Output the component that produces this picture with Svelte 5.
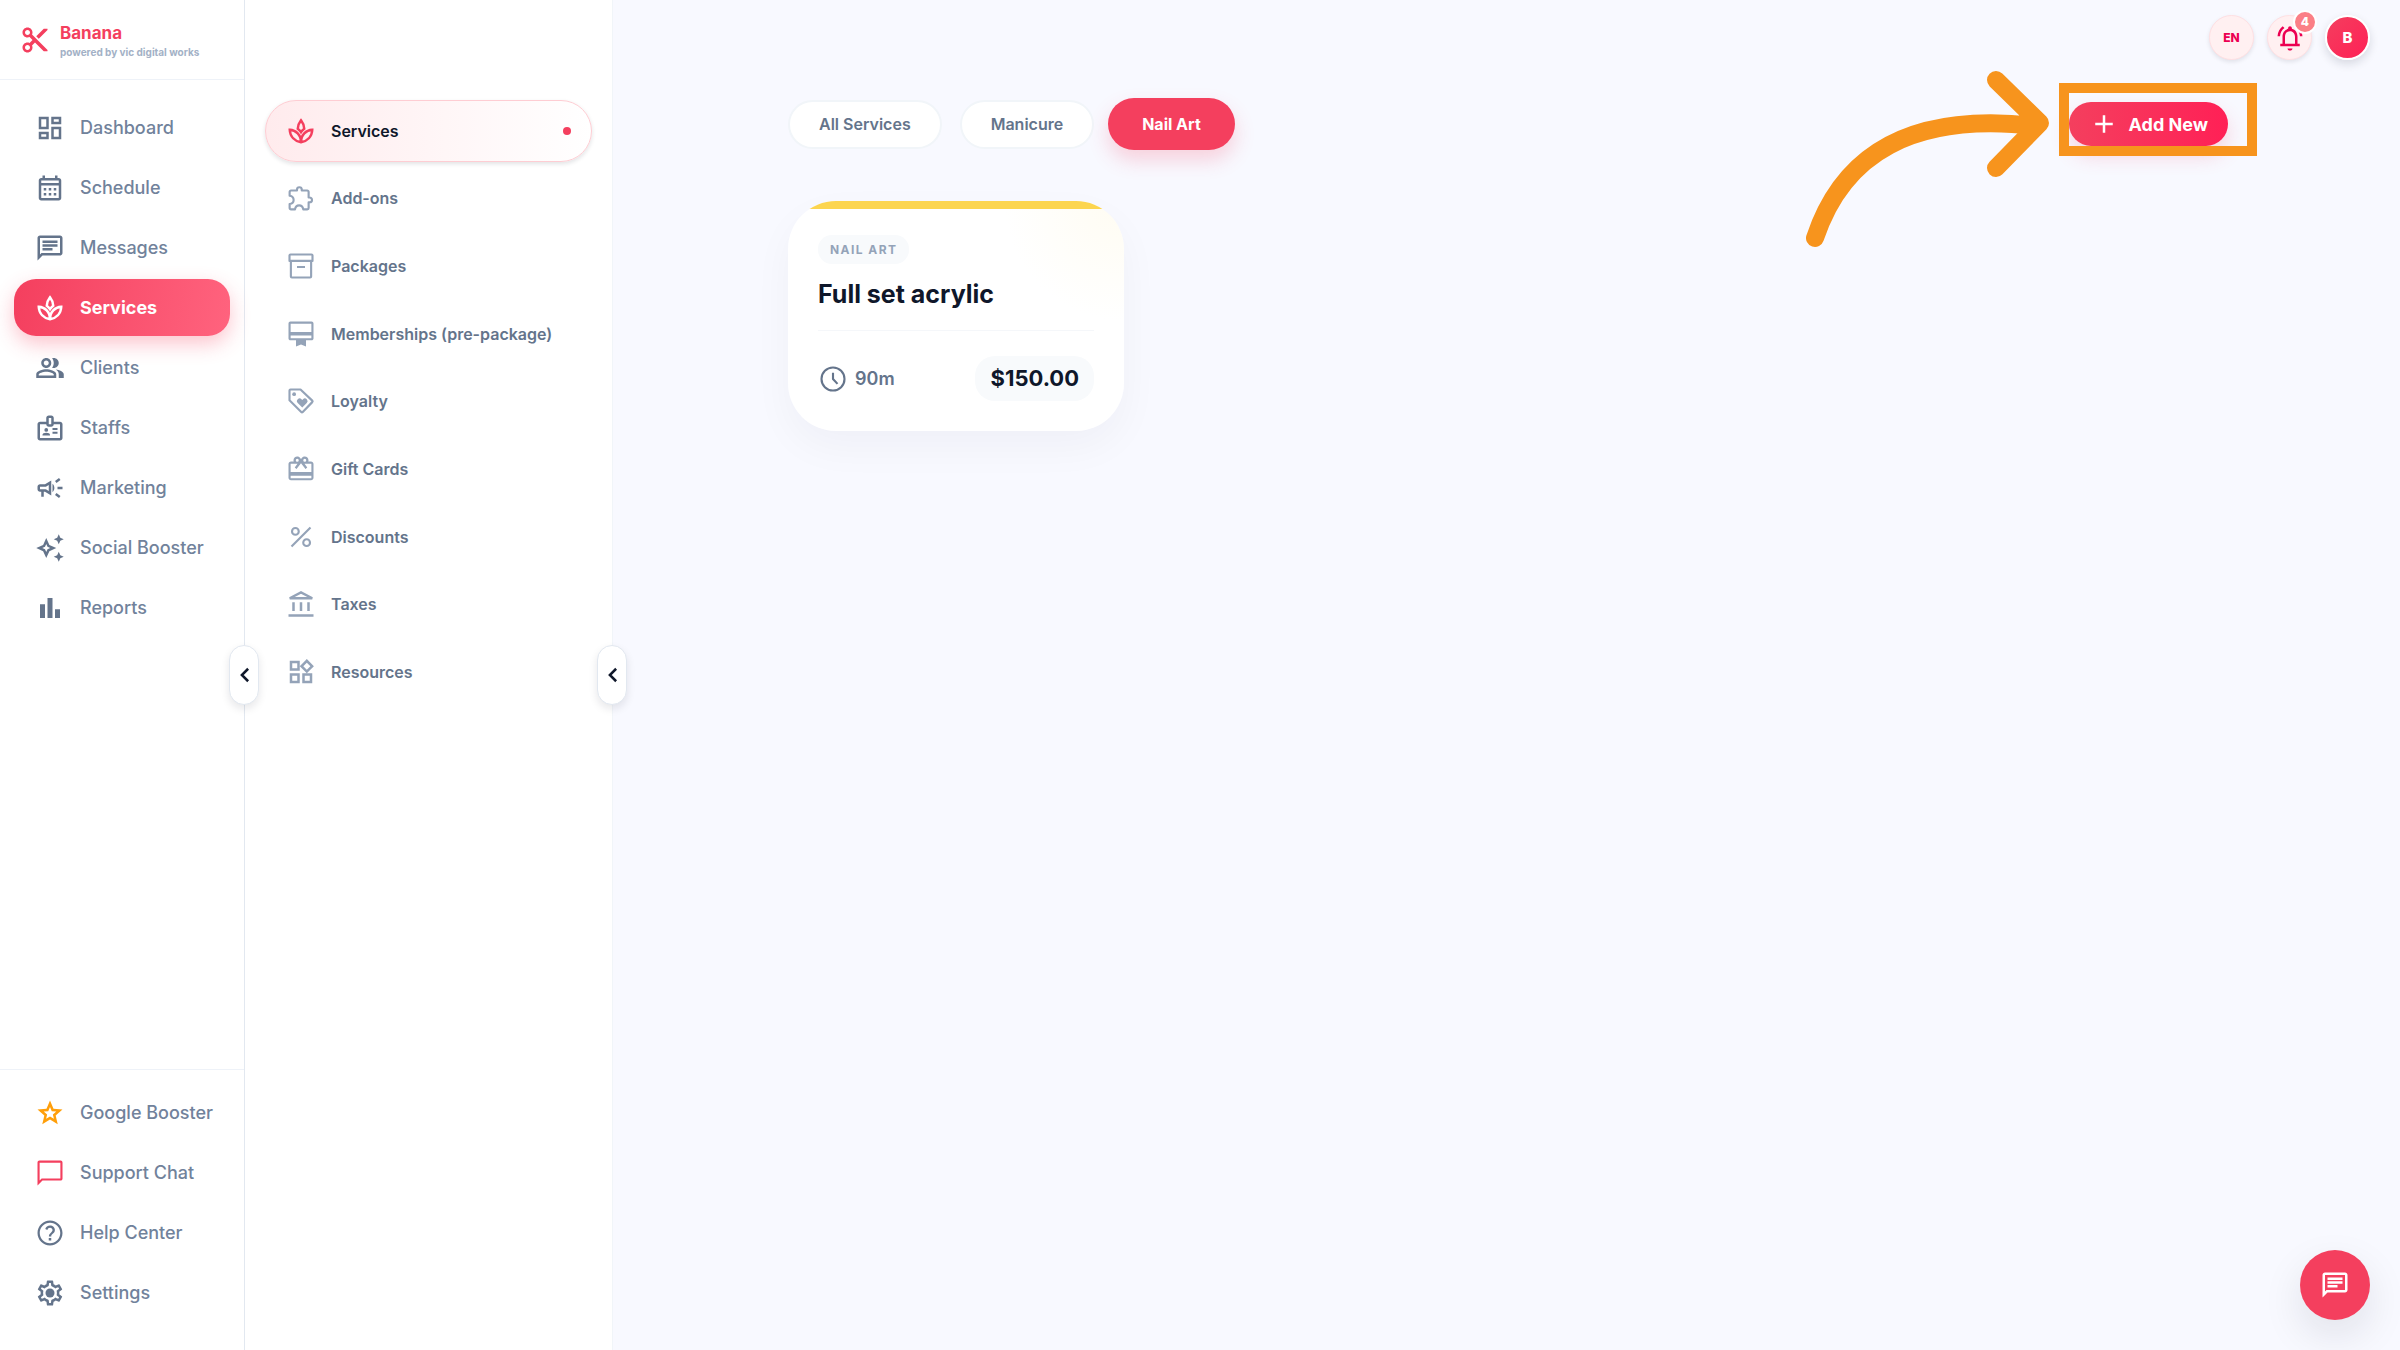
<script lang="ts">
	type Item = { label: string; icon: string; tone?: string };

	// 24x24 outline icons, filled with the current colour
	const icons: Record<string, string> = {
		cut: 'M9.64 7.64c.23-.5.36-1.05.36-1.64 0-2.21-1.79-4-4-4S2 3.79 2 6s1.79 4 4 4c.59 0 1.14-.13 1.64-.36L10 12l-2.36 2.36C7.14 14.13 6.59 14 6 14c-2.21 0-4 1.79-4 4s1.79 4 4 4 4-1.79 4-4c0-.59-.13-1.14-.36-1.64L12 14l7 7h3v-1L9.64 7.64zM6 8c-1.1 0-2-.89-2-2s.9-2 2-2 2 .89 2 2-.9 2-2 2zm0 12c-1.1 0-2-.89-2-2s.9-2 2-2 2 .89 2 2-.9 2-2 2zM19 3l-6 6 2 2 7-7V3z',
		dashboard: 'M19 5v2h-4V5h4M9 5v6H5V5h4m10 8v6h-4v-6h4M9 17v2H5v-2h4M21 3h-8v6h8V3zM11 3H3v10h8V3zm10 8h-8v10h8V11zm-10 4H3v6h8v-6z',
		calendar: 'M19 4h-1V2h-2v2H8V2H6v2H5c-1.11 0-1.99.9-1.99 2L3 20c0 1.1.89 2 2 2h14c1.1 0 2-.9 2-2V6c0-1.1-.9-2-2-2zm0 16H5V10h14v10zm0-12H5V6h14v2zM9 14H7v-2h2v2zm4 0h-2v-2h2v2zm4 0h-2v-2h2v2zm-8 4H7v-2h2v2zm4 0h-2v-2h2v2zm4 0h-2v-2h2v2z',
		chat: 'M4 4h16v12H5.17L4 17.17V4m0-2c-1.1 0-1.99.9-1.99 2L2 22l4-4h14c1.1 0 2-.9 2-2V4c0-1.1-.9-2-2-2H4zm2 10h8v2H6v-2zm0-3h12v2H6V9zm0-3h12v2H6V6z',
		people: 'M16.67 13.13C18.04 14.06 19 15.32 19 17v3h4v-3c0-2.18-3.57-3.47-6.33-3.87zM15 12c2.21 0 4-1.79 4-4s-1.79-4-4-4c-.47 0-.91.1-1.33.24C14.5 5.27 15 6.58 15 8s-.5 2.73-1.33 3.76c.42.14.86.24 1.33.24zM9 12c2.21 0 4-1.79 4-4s-1.79-4-4-4-4 1.79-4 4 1.79 4 4 4zm0-6c1.1 0 2 .9 2 2s-.9 2-2 2-2-.9-2-2 .9-2 2-2zM9 13c-2.67 0-8 1.34-8 4v3h16v-3c0-2.66-5.33-4-8-4zm6 5H3v-.99C3.2 16.29 6.3 15 9 15s5.8 1.29 6 2v1z',
		badge: 'M20 7h-5V4c0-1.1-.9-2-2-2h-2c-1.1 0-2 .9-2 2v3H4c-1.1 0-2 .9-2 2v11c0 1.1.9 2 2 2h16c1.1 0 2-.9 2-2V9c0-1.1-.9-2-2-2zM11 4h2v5h-2V4zm9 16H4V9h5c0 1.1.9 2 2 2h2c1.1 0 2-.9 2-2h5v11zM9 12a1.5 1.5 0 1 0 0 3 1.5 1.5 0 0 0 0-3zM11.08 16.18c-.64-.28-1.34-.43-2.08-.43s-1.44.15-2.08.43c-.56.24-.92.78-.92 1.39V18h6v-.43c0-.61-.36-1.15-.92-1.39zM14 15h4v1.5h-4zM14 12h4v1.5h-4z',
		campaign: 'M18 11v2h4v-2h-4zM16 17.61c.96.71 2.21 1.65 3.2 2.39.4-.53.8-1.07 1.2-1.6-.99-.74-2.24-1.68-3.2-2.4-.4.54-.8 1.08-1.2 1.61zM20.4 5.6c-.4-.53-.8-1.07-1.2-1.6-.99.74-2.24 1.68-3.2 2.4.4.53.8 1.07 1.2 1.6.96-.72 2.21-1.65 3.2-2.4zM4 9c-1.1 0-2 .9-2 2v2c0 1.1.9 2 2 2h1v4h2v-4h1l5 3V6L8 9H4zm5.03 1.71L11 9.53v4.94l-1.97-1.18-.48-.29H4v-2h4.55l.48-.29zM15.5 12c0-1.33-.58-2.53-1.5-3.35v6.69c.92-.81 1.5-2.01 1.5-3.34z',
		sparkle: 'M19 9l1.25-2.75L23 5l-2.75-1.25L19 1l-1.25 2.75L15 5l2.75 1.25L19 9zm0 6l-1.25 2.75L15 19l2.75 1.25L19 23l1.25-2.75L23 19l-2.75-1.25L19 15zM11.5 9.5L9 4 6.5 9.5 1 12l5.5 2.5L9 20l2.5-5.5L17 12l-5.5-2.5zm-1.51 3.49L9 15.17l-.99-2.18L5.83 12l2.18-.99L9 8.83l.99 2.18 2.18.99-2.18.99z',
		bars: 'M4 9h4v11H4zm12 4h4v7h-4zm-6-9h4v16h-4z',
		star: 'M22 9.24l-7.19-.62L12 2 9.19 8.63 2 9.24l5.46 4.73L5.82 21 12 17.27 18.18 21l-1.63-7.03L22 9.24zM12 14.8l-3.1 1.8.8-3.5L7 10.8l3.6-.3L12 7.1l1.4 3.4 3.6.3-2.7 2.3.8 3.5z',
		bubble: 'M20.5 2h-17C2.7 2 2 2.7 2 3.5V22l4-4h14.5c.8 0 1.5-.7 1.5-1.5v-13c0-.8-.7-1.5-1.5-1.5zm-.2 14.3H5.3l-1.6 1.6V3.7h16.6v12.6z',
		help: 'M11 18h2v-2h-2v2zM12 2C6.48 2 2 6.48 2 12s4.48 10 10 10 10-4.48 10-10S17.52 2 12 2zm0 18.2c-4.53 0-8.2-3.67-8.2-8.2S7.47 3.8 12 3.8s8.2 3.67 8.2 8.2-3.67 8.2-8.2 8.2zM12 6c-1.9 0-3.3 1.1-3.8 2.8l1.7.7c.3-1.1 1-1.8 2.1-1.8 1.2 0 2 .8 2 1.9 0 .8-.5 1.4-1.3 2.1-1.2 1.1-1.6 1.7-1.6 3.1H13c0-1 .2-1.3 1.2-2.2 1-.9 1.7-1.8 1.7-3.1C15.9 7.5 14.2 6 12 6z',
		gear: 'M19.43 12.98c.04-.32.07-.64.07-.98 0-.34-.03-.66-.07-.98l2.11-1.65c.19-.15.24-.42.12-.64l-2-3.46c-.09-.16-.26-.25-.44-.25-.06 0-.12.01-.17.03l-2.49 1c-.52-.4-1.08-.73-1.69-.98l-.38-2.65C14.46 2.18 14.25 2 14 2h-4c-.25 0-.46.18-.49.42l-.38 2.65c-.61.25-1.17.59-1.69.98l-2.49-1c-.06-.02-.12-.03-.18-.03-.17 0-.34.09-.43.25l-2 3.46c-.13.22-.07.49.12.64l2.11 1.65c-.04.32-.07.65-.07.98s.03.66.07.98l-2.11 1.65c-.19.15-.24.42-.12.64l2 3.46c.09.16.26.25.44.25.06 0 .12-.01.17-.03l2.49-1c.52.4 1.08.73 1.69.98l.38 2.65c.03.24.24.42.49.42h4c.25 0 .46-.18.49-.42l.38-2.65c.61-.25 1.17-.59 1.69-.98l2.49 1c.06.02.12.03.18.03.17 0 .34-.09.43-.25l2-3.46c.12-.22.07-.49-.12-.64l-2.11-1.65zm-1.98-1.71c.04.31.05.52.05.73 0 .21-.02.43-.05.73l-.14 1.13.89.7 1.08.84-.7 1.21-1.27-.51-1.04-.42-.9.68c-.43.32-.84.56-1.25.73l-1.06.43-.16 1.13-.2 1.35h-1.4l-.19-1.35-.16-1.13-1.06-.43c-.43-.18-.83-.41-1.23-.71l-.91-.7-1.06.43-1.27.51-.7-1.21 1.08-.84.89-.7-.14-1.13c-.03-.31-.05-.54-.05-.74s.02-.43.05-.73l.14-1.13-.89-.7-1.08-.84.7-1.21 1.27.51 1.04.42.9-.68c.43-.32.84-.56 1.25-.73l1.06-.43.16-1.13.2-1.35h1.39l.19 1.35.16 1.13 1.06.43c.43.18.83.41 1.23.71l.91.7 1.06-.43 1.27-.51.7 1.21-1.07.85-.89.7.14 1.13z',
		membership: 'M20.5 2h-17C2.7 2 2 2.7 2 3.5v12c0 .8.7 1.5 1.5 1.5H8v5l4-1.6 4 1.6v-5h4.5c.8 0 1.5-.7 1.5-1.5v-12c0-.8-.7-1.5-1.5-1.5zm-.2 13.3H3.7v-2.1h16.6v2.1zm0-5H3.7V3.7h16.6v6.6z',
		gift: 'M20 6h-2.18c.11-.31.18-.65.18-1 0-1.66-1.34-3-3-3-1.05 0-1.96.54-2.5 1.35l-.5.67-.5-.68C10.96 2.54 10.05 2 9 2 7.34 2 6 3.34 6 5c0 .35.07.69.18 1H4c-1.11 0-2 .89-2 2v11c0 1.11.89 2 2 2h16c1.11 0 2-.89 2-2V8c0-1.11-.89-2-2-2zm-5-2.3a1.2 1.2 0 1 1 0 2.4 1.2 1.2 0 0 1 0-2.4zm-6 0a1.2 1.2 0 1 1 0 2.4 1.2 1.2 0 0 1 0-2.4zM20.3 19.3H3.7v-2h16.6v2zm0-5H3.7V7.7h5.5L7 10.83l1.4 1.1L12 7.4l3.6 4.53 1.4-1.1-2.2-3.13h5.5v6.6z',
		bell: 'M12 22c1.1 0 2-.9 2-1.7h-4c0 .8.9 1.7 2 1.7zm6-5.4V11c0-3.07-1.63-5.64-4.5-6.32V4c0-.83-.67-1.5-1.5-1.5s-1.5.67-1.5 1.5v.68C7.64 5.36 6 7.92 6 11v5.6H4.2v1.9h15.6v-1.9H18zm-2 0H8V11c0-2.48 1.51-4.5 4-4.5s4 2.02 4 4.5v5.6zM7.58 4.08L6.15 2.65C3.75 4.48 2.17 7.3 2.03 10.5h2c.15-2.65 1.51-4.97 3.55-6.42zm12.39 6.42h2c-.15-3.2-1.73-6.02-4.12-7.85l-1.42 1.43c2.02 1.45 3.39 3.77 3.54 6.42z',
		widgets: 'M16.66 4.52l2.83 2.83-2.83 2.83-2.83-2.83 2.83-2.83M9 5v4H5V5h4m10 10v4h-4v-4h4M9 15v4H5v-4h4m7.66-13.31L11 7.34 16.66 13l5.66-5.66-5.66-5.65zM11 3H3v8h8V3zm10 10h-8v8h8v-8zm-10 0H3v8h8v-8z'
	};

	// icons drawn as lines
	const lines: Record<string, string> = {
		spa: 'M12 21C7 20.1 3.2 16.5 3 11c5 .3 9 4 9 10 0-6 4-9.7 9-10-.2 5.5-4 9.1-9 10zM9.4 10.2C9.6 7.6 10.4 5.4 12 3.4c1.6 2 2.4 4.2 2.6 6.8-1 .7-1.9 1.6-2.6 2.7-.7-1.1-1.6-2-2.6-2.7z',
		puzzle: 'M8.8 5.3a1.9 1.9 0 0 1 3.8 0V6H17a1.1 1.1 0 0 1 1.1 1.1v4.5h.8a1.9 1.9 0 0 1 0 3.8h-.8V20a1.1 1.1 0 0 1-1.1 1.1h-3.2c-.3-2-1.5-3.2-3.3-3.2s-3 1.2-3.3 3.2H4A1.1 1.1 0 0 1 2.9 20v-3.2c2-.3 3.2-1.5 3.2-3.3s-1.2-3-3.2-3.3V7.1A1.1 1.1 0 0 1 4 6h4.800z',
		archive: 'M2.8 3.6c0-.5.3-.8.8-.8h16.8c.5 0 .8.3.8.8v4.3H2.8zM3.9 7.9v12.5c0 .5.3.8.8.8h14.6c.5 0 .8-.3.8-.8V7.9M8.8 12.8h6.4',
		tag: 'M2.8 3.6c0-.5.3-.8.8-.8h8L21 11.7c.4.4.4.8 0 1.2l-7.6 7.9c-.4.4-.8.4-1.2 0L2.8 11.4z',
		percent: 'M19.6 4.4 4.4 19.6M10.2 7.5a2.7 2.7 0 1 1-5.4 0 2.7 2.7 0 0 1 5.4 0zM19.2 16.5a2.7 2.7 0 1 1-5.4 0 2.7 2.7 0 0 1 5.4 0z',
		bank: 'M2 21.2h20M6 10.5v7M12 10.5v7M18 10.5v7M3 7.4h18L12 2.8z',
		clock: 'M21.2 12a9.2 9.2 0 1 1-18.4 0 9.2 9.2 0 0 1 18.4 0zM12 7v5l3.6 3.9',
		plus: 'M12 5v14M5 12h14',
		back: 'M14.5 7 9.5 12l5 5'
	};

	const mainNav: Item[] = [
		{ label: 'Dashboard', icon: 'dashboard' },
		{ label: 'Schedule', icon: 'calendar' },
		{ label: 'Messages', icon: 'chat' },
		{ label: 'Services', icon: 'spa' },
		{ label: 'Clients', icon: 'people' },
		{ label: 'Staffs', icon: 'badge' },
		{ label: 'Marketing', icon: 'campaign' },
		{ label: 'Social Booster', icon: 'sparkle' },
		{ label: 'Reports', icon: 'bars' }
	];

	const footNav: Item[] = [
		{ label: 'Google Booster', icon: 'star', tone: 'amber' },
		{ label: 'Support Chat', icon: 'bubble', tone: 'rose' },
		{ label: 'Help Center', icon: 'help' },
		{ label: 'Settings', icon: 'gear' }
	];

	const subNav: Item[] = [
		{ label: 'Services', icon: 'spa' },
		{ label: 'Add-ons', icon: 'puzzle' },
		{ label: 'Packages', icon: 'archive' },
		{ label: 'Memberships (pre-package)', icon: 'membership' },
		{ label: 'Loyalty', icon: 'tag' },
		{ label: 'Gift Cards', icon: 'gift' },
		{ label: 'Discounts', icon: 'percent' },
		{ label: 'Taxes', icon: 'bank' },
		{ label: 'Resources', icon: 'widgets' }
	];

	const categories = ['All Services', 'Manicure', 'Nail Art'];
	const services = [{ category: 'Nail Art', name: 'Full set acrylic', minutes: 90, price: 150 }];

	let section = $state('Services');
	let page = $state('Services');
	let category = $state('Nail Art');

	const visible = $derived(
		category === 'All Services' ? services : services.filter((s) => s.category === category)
	);
</script>

{#snippet icon(name: string)}
	<svg class="icon" viewBox="0 0 24 24" aria-hidden="true">
		{#if icons[name]}
			<path d={icons[name]} fill="currentColor" />
		{:else}
			<path class="line {name}" d={lines[name]} />
		{/if}
		{#if name === 'gear'}
			<circle cx="12" cy="12" r="3.6" fill="currentColor" />
		{/if}
		{#if name === 'tag'}
			<circle cx="6.5" cy="6.5" r="1.5" fill="currentColor" />
			<path
				d="M13 17.2 9.4 13.5a2.1 2.1 0 0 1 3-3l.6.6.6-.6a2.1 2.1 0 0 1 3 3z"
				fill="currentColor"
			/>
		{/if}
	</svg>
{/snippet}

{#snippet navLink(item: Item)}
	<a
		href="#{item.icon}"
		class="nav-link"
		class:active={section === item.label}
		aria-current={section === item.label ? 'page' : undefined}
		onclick={() => (section = item.label)}
	>
		<span class="nav-icon {item.tone ?? ''}">{@render icon(item.icon)}</span>
		{item.label}
	</a>
{/snippet}

<div class="shell">
	<!-- Primary sidebar -->
	<aside class="sidebar">
		<div class="brand">
			{@render icon('cut')}
			<div>
				<div class="brand-name">Banana</div>
				<div class="brand-by">powered by vic digital works</div>
			</div>
		</div>
		<nav class="nav" aria-label="Main">
			{#each mainNav as item}
				{@render navLink(item)}
			{/each}
		</nav>
		<nav class="nav foot" aria-label="Support">
			{#each footNav as item}
				{@render navLink(item)}
			{/each}
		</nav>
		<button class="collapse" aria-label="Collapse sidebar">{@render icon('back')}</button>
	</aside>

	<!-- Services sub menu -->
	<aside class="submenu">
		<nav class="sub-list" aria-label="Services">
			{#each subNav as item}
				<a
					href="#{item.icon}"
					class="sub-link"
					class:active={page === item.label}
					onclick={() => (page = item.label)}
				>
					<span class="sub-icon">{@render icon(item.icon)}</span>
					{item.label}
					{#if page === item.label}<span class="dot"></span>{/if}
				</a>
			{/each}
		</nav>
		<button class="collapse" aria-label="Collapse services menu">{@render icon('back')}</button>
	</aside>

	<div class="content">
		<header class="topbar">
			<button class="round lang">EN</button>
			<button class="round" aria-label="Notifications">
				{@render icon('bell')}
				<span class="count">4</span>
			</button>
			<button class="round avatar">B</button>
		</header>

		<main class="page">
			<div class="toolbar">
				<div class="tabs">
					{#each categories as name}
						<button class="tab" class:active={category === name} onclick={() => (category = name)}>
							{name}
						</button>
					{/each}
				</div>
				<div class="add-wrap">
					<button class="add">{@render icon('plus')} Add New</button>
					<div class="highlight"></div>
					<svg class="arrow" viewBox="0 0 244 178" aria-hidden="true">
						<path d="M9 168C37 84 106 42 229 56M190 10l44 43-44 45" />
					</svg>
				</div>
			</div>

			<div class="cards">
				{#each visible as service}
					<article class="card">
						<div class="card-body">
							<span class="chip">{service.category}</span>
							<h2>{service.name}</h2>
							<div class="meta">
								<span class="duration">{@render icon('clock')} {service.minutes}m</span>
								<span class="price">${service.price.toFixed(2)}</span>
							</div>
						</div>
					</article>
				{/each}
			</div>
		</main>
	</div>

	<button class="fab" aria-label="Open chat">{@render icon('chat')}</button>
</div>

<style>
	:global(body) {
		margin: 0;
		background: #f8f9ff;
	}

	.shell {
		display: flex;
		min-height: 100vh;
		font-family: Inter, 'Liberation Sans', sans-serif;
		color: #0f172a;
	}

	button {
		font: inherit;
		border: 0;
		cursor: pointer;
	}

	a {
		text-decoration: none;
	}

	.icon {
		display: block;
		flex: none;
		width: 30px;
		height: 30px;
	}

	.line {
		fill: none;
		stroke: currentColor;
		stroke-width: 1.7;
		stroke-linejoin: round;
	}

	.line.spa,
	.line.back,
	.line.bank,
	.line.plus {
		stroke-width: 2;
		stroke-linejoin: miter;
	}

	/* === SIDEBAR === */
	.sidebar {
		position: relative;
		z-index: 2;
		display: flex;
		flex-direction: column;
		flex: none;
		box-sizing: border-box;
		width: 245px;
		background: #fff;
		border-right: 1px solid #e2e8f0;
	}

	.brand {
		display: flex;
		align-items: center;
		gap: 10px;
		box-sizing: border-box;
		height: 80px;
		padding-left: 20px;
		border-bottom: 1px solid #eef2f8;
		color: #f43f5e;
	}

	.brand-name {
		padding-top: 2px;
		font-size: 17px;
		line-height: 22px;
		font-weight: 700;
	}

	.brand-by {
		font-size: 10px;
		line-height: 16px;
		font-weight: 700;
		color: #a3b1c6;
	}

	.nav {
		display: flex;
		flex-direction: column;
		gap: 3px;
		padding: 19px 14px;
	}

	.foot {
		margin-top: auto;
		padding: 14px 14px 29px;
		border-top: 1px solid #eef2f8;
	}

	.nav-link {
		display: flex;
		align-items: center;
		gap: 15px;
		height: 57px;
		padding-left: 21px;
		border-radius: 22px;
		font-size: 18px;
		font-weight: 500;
		color: #71829b;
	}

	.nav-link.active {
		background: linear-gradient(100deg, #f43f5e, #ff637e);
		box-shadow: 0 8px 20px rgba(244, 63, 94, 0.3);
		font-weight: 700;
		color: #fff;
	}

	.nav-icon {
		color: #64748b;
	}

	.active .nav-icon {
		color: #fff;
	}

	.nav-icon.amber {
		color: #ff9f0a;
	}

	.nav-icon.rose {
		color: #f43f5e;
	}

	.collapse {
		position: absolute;
		top: 50%;
		right: -15px;
		transform: translateY(-50%);
		display: grid;
		place-items: center;
		box-sizing: border-box;
		width: 30px;
		height: 60px;
		padding: 0;
		border: 1px solid #e2e8f0;
		border-radius: 15px;
		background: #fff;
		box-shadow: 0 4px 8px rgba(15, 23, 42, 0.1);
		color: #0f172a;
	}

	/* === SUB MENU === */
	.submenu {
		position: relative;
		z-index: 1;
		flex: none;
		box-sizing: border-box;
		width: 368px;
		padding: 100px 20px 0;
		background: #fff;
		border-right: 1px solid #f1f5f9;
	}

	.sub-list {
		display: grid;
		grid-auto-rows: 1fr;
		gap: 6px;
		height: 603px;
	}

	.sub-link {
		display: flex;
		align-items: center;
		gap: 15px;
		padding: 0 20px;
		border: 1px solid transparent;
		border-radius: 31px;
		font-size: 16px;
		font-weight: 600;
		color: #64748b;
	}

	.sub-icon {
		color: #94a3b8;
	}

	.sub-link.active {
		border-color: #fecdd3;
		background: linear-gradient(90deg, #ffebed, #fff);
		box-shadow: 0 2px 4px rgba(15, 23, 42, 0.12);
		color: #0f172a;
	}

	.active .sub-icon {
		color: #f43f5e;
	}

	.dot {
		width: 8px;
		height: 8px;
		margin-left: auto;
		border-radius: 50%;
		background: #f43f5e;
	}

	/* === CONTENT === */
	.content {
		flex: 1;
		min-width: 0;
	}

	.topbar {
		display: flex;
		justify-content: flex-end;
		align-items: center;
		gap: 13px;
		height: 75px;
		padding-right: 30px;
	}

	.round {
		position: relative;
		display: grid;
		place-items: center;
		box-sizing: border-box;
		width: 45px;
		height: 45px;
		padding: 0;
		border: 1px solid #ffe0e3;
		border-radius: 50%;
		background: #fff0f1;
		box-shadow: 0 2px 4px rgba(15, 23, 42, 0.1);
		color: #ec0052;
	}

	.lang {
		font-size: 12px;
		font-weight: 800;
	}

	.avatar {
		border: 2px solid #fff;
		background: linear-gradient(135deg, #f43f5e, #ff2056) border-box;
		box-shadow: 0 4px 10px rgba(15, 23, 42, 0.14);
		font-size: 15px;
		font-weight: 800;
		color: #fff;
	}

	.count {
		position: absolute;
		top: -6px;
		right: -6px;
		box-sizing: border-box;
		width: 24px;
		height: 24px;
		border: 2px solid #fff;
		border-radius: 50%;
		background: #fb7f86;
		font-size: 12px;
		line-height: 20px;
		font-weight: 800;
		text-align: center;
		color: #fff;
	}

	.page {
		padding: 23px 172px 60px 175px;
	}

	.toolbar {
		display: flex;
		justify-content: space-between;
		align-items: center;
		min-height: 52px;
	}

	.tabs {
		display: flex;
		align-items: center;
		gap: 18px;
	}

	.tab {
		height: 49px;
		padding: 0 29px;
		border: 2px solid #f1f5f9;
		border-radius: 25px;
		background: #fff;
		font-size: 16px;
		font-weight: 600;
		color: #64748b;
	}

	.tab.active {
		height: 52px;
		margin: 0 -4px;
		padding: 0 34px;
		border: 0;
		border-radius: 26px;
		background: #f43f5e;
		box-shadow: 0 10px 20px rgba(244, 63, 94, 0.22);
		font-weight: 700;
		color: #fff;
	}

	.add-wrap {
		position: relative;
	}

	.add {
		display: flex;
		align-items: center;
		gap: 10px;
		height: 44px;
		padding: 0 20px;
		border-radius: 22px;
		background: linear-gradient(90deg, #f43f5e, #ff2056);
		box-shadow: 0 10px 20px rgba(244, 63, 94, 0.2);
		font-size: 18px;
		font-weight: 700;
		color: #fff;
	}

	/* Callout over the add button */
	.highlight {
		position: absolute;
		inset: -19px -29px -10px -10px;
		border: 10px solid #f7941d;
		pointer-events: none;
	}

	.arrow {
		position: absolute;
		top: -32px;
		right: calc(100% + 19px);
		width: 244px;
		height: 178px;
		fill: none;
		stroke: #f7941d;
		stroke-width: 18;
		stroke-linecap: round;
		stroke-linejoin: round;
		pointer-events: none;
	}

	/* === SERVICE CARDS === */
	.cards {
		display: grid;
		grid-template-columns: repeat(auto-fill, minmax(300px, 1fr));
		gap: 32px;
		margin-top: 51px;
	}

	.card {
		overflow: hidden;
		border-radius: 48px;
		background: radial-gradient(circle at 100% 0, #fffcf2, #fff 120px);
		box-shadow: 0 16px 40px rgba(15, 23, 42, 0.04);
	}

	.card::before {
		content: '';
		display: block;
		height: 8px;
		background: #fcd54f;
	}

	.card-body {
		padding: 26px 30px 30px;
	}

	.chip {
		display: inline-block;
		padding: 0 12px;
		border-radius: 14px;
		background: #f8fafc;
		font-size: 12px;
		line-height: 29px;
		font-weight: 700;
		letter-spacing: 0.12em;
		text-transform: uppercase;
		color: #94a3b8;
	}

	h2 {
		margin: 12px 0 0;
		font-size: 25px;
		line-height: 36px;
		font-weight: 700;
	}

	.meta {
		display: flex;
		justify-content: space-between;
		align-items: center;
		margin-top: 18px;
		padding-top: 25px;
		border-top: 1px solid #f5f7fa;
	}

	.duration {
		display: flex;
		align-items: center;
		gap: 7px;
		font-size: 18px;
		font-weight: 600;
		color: #64748b;
	}

	.price {
		padding: 0 15px;
		border-radius: 20px;
		background: #f8fafc;
		font-size: 22px;
		line-height: 45px;
		font-weight: 700;
	}

	.fab {
		position: fixed;
		right: 30px;
		bottom: 30px;
		display: grid;
		place-items: center;
		width: 70px;
		height: 70px;
		padding: 0;
		border-radius: 50%;
		background: #f43f5e;
		box-shadow: 0 16px 40px rgba(15, 23, 42, 0.1);
		color: #fff;
	}
</style>
